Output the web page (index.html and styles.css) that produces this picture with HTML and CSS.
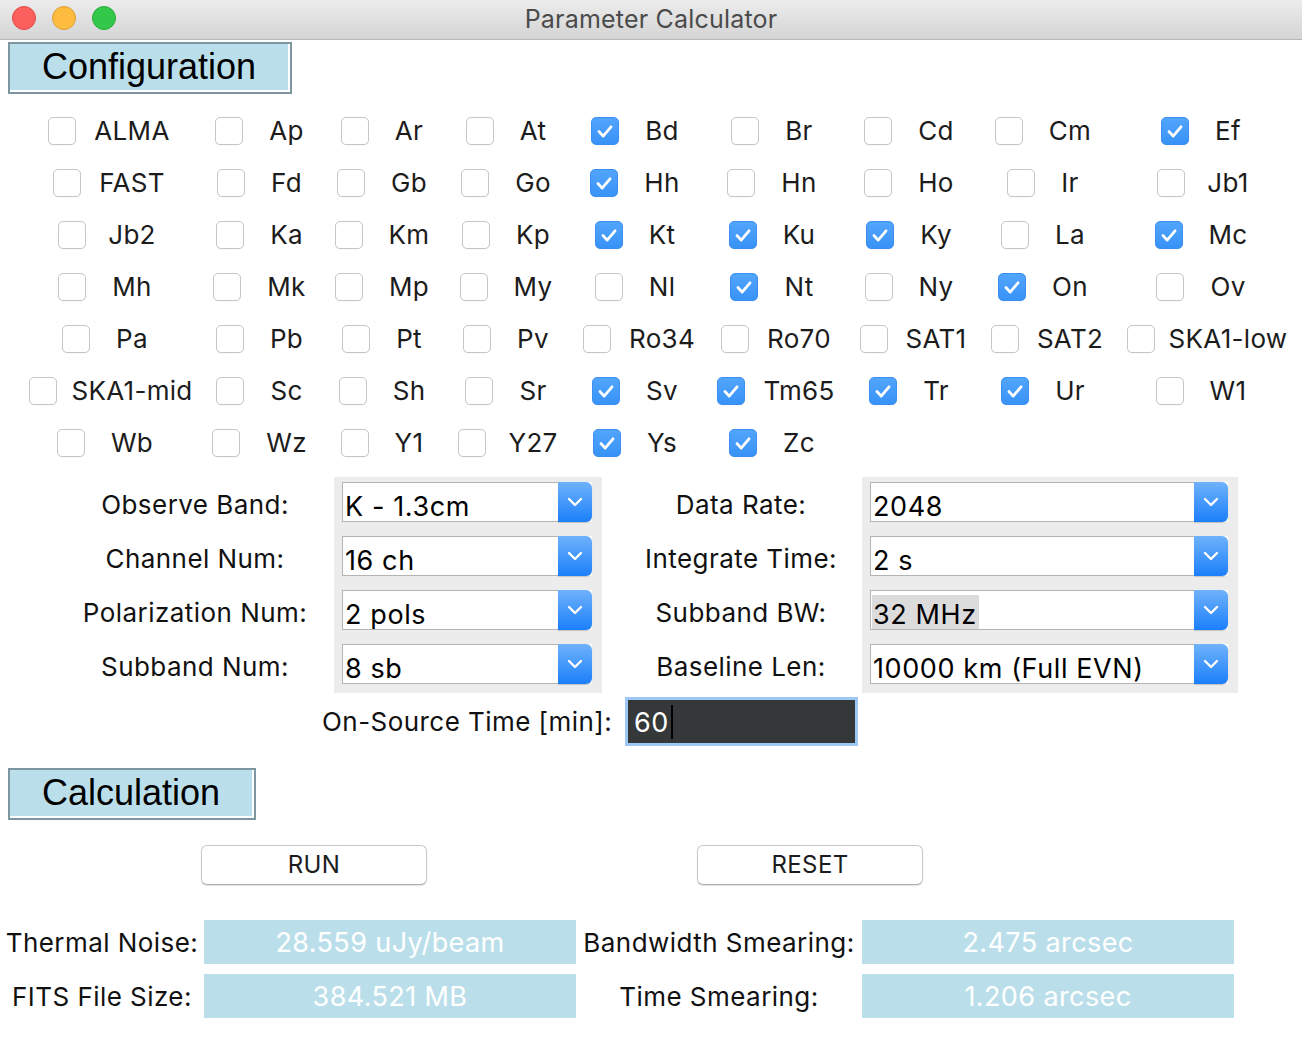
FILE: index.html
```html
<!DOCTYPE html>
<html>
<head>
<meta charset="utf-8">
<title>Parameter Calculator</title>
<link rel="stylesheet" href="styles.css">
</head>
<body>
<div class="window">
  <div class="titlebar">
    <div class="lights">
      <span class="light red"></span>
      <span class="light yellow"></span>
      <span class="light green"></span>
    </div>
    <div class="title">Parameter Calculator</div>
    <div></div>
  </div>

  <div class="section-head config">Configuration</div>

  <div class="checks">
    <div class="cell"><span class="box"></span><span class="lbl l">ALMA</span></div>
    <div class="cell"><span class="box"></span><span class="lbl">Ap</span></div>
    <div class="cell"><span class="box"></span><span class="lbl">Ar</span></div>
    <div class="cell"><span class="box"></span><span class="lbl">At</span></div>
    <div class="cell"><span class="box on"><svg viewBox="0 0 28 28"><path d="M7.5 14.5l4.5 5 8.5-10"/></svg></span><span class="lbl">Bd</span></div>
    <div class="cell"><span class="box"></span><span class="lbl">Br</span></div>
    <div class="cell"><span class="box"></span><span class="lbl">Cd</span></div>
    <div class="cell"><span class="box"></span><span class="lbl">Cm</span></div>
    <div class="cell"><span class="box on"><svg viewBox="0 0 28 28"><path d="M7.5 14.5l4.5 5 8.5-10"/></svg></span><span class="lbl">Ef</span></div>

    <div class="cell"><span class="box"></span><span class="lbl l">FAST</span></div>
    <div class="cell"><span class="box"></span><span class="lbl">Fd</span></div>
    <div class="cell"><span class="box"></span><span class="lbl">Gb</span></div>
    <div class="cell"><span class="box"></span><span class="lbl">Go</span></div>
    <div class="cell"><span class="box on"><svg viewBox="0 0 28 28"><path d="M7.5 14.5l4.5 5 8.5-10"/></svg></span><span class="lbl">Hh</span></div>
    <div class="cell"><span class="box"></span><span class="lbl">Hn</span></div>
    <div class="cell"><span class="box"></span><span class="lbl">Ho</span></div>
    <div class="cell"><span class="box"></span><span class="lbl">Ir</span></div>
    <div class="cell"><span class="box"></span><span class="lbl m">Jb1</span></div>

    <div class="cell"><span class="box"></span><span class="lbl m">Jb2</span></div>
    <div class="cell"><span class="box"></span><span class="lbl">Ka</span></div>
    <div class="cell"><span class="box"></span><span class="lbl">Km</span></div>
    <div class="cell"><span class="box"></span><span class="lbl">Kp</span></div>
    <div class="cell"><span class="box on"><svg viewBox="0 0 28 28"><path d="M7.5 14.5l4.5 5 8.5-10"/></svg></span><span class="lbl">Kt</span></div>
    <div class="cell"><span class="box on"><svg viewBox="0 0 28 28"><path d="M7.5 14.5l4.5 5 8.5-10"/></svg></span><span class="lbl">Ku</span></div>
    <div class="cell"><span class="box on"><svg viewBox="0 0 28 28"><path d="M7.5 14.5l4.5 5 8.5-10"/></svg></span><span class="lbl">Ky</span></div>
    <div class="cell"><span class="box"></span><span class="lbl">La</span></div>
    <div class="cell"><span class="box on"><svg viewBox="0 0 28 28"><path d="M7.5 14.5l4.5 5 8.5-10"/></svg></span><span class="lbl">Mc</span></div>

    <div class="cell"><span class="box"></span><span class="lbl">Mh</span></div>
    <div class="cell"><span class="box"></span><span class="lbl">Mk</span></div>
    <div class="cell"><span class="box"></span><span class="lbl">Mp</span></div>
    <div class="cell"><span class="box"></span><span class="lbl">My</span></div>
    <div class="cell"><span class="box"></span><span class="lbl">Nl</span></div>
    <div class="cell"><span class="box on"><svg viewBox="0 0 28 28"><path d="M7.5 14.5l4.5 5 8.5-10"/></svg></span><span class="lbl">Nt</span></div>
    <div class="cell"><span class="box"></span><span class="lbl">Ny</span></div>
    <div class="cell"><span class="box on"><svg viewBox="0 0 28 28"><path d="M7.5 14.5l4.5 5 8.5-10"/></svg></span><span class="lbl">On</span></div>
    <div class="cell"><span class="box"></span><span class="lbl">Ov</span></div>

    <div class="cell"><span class="box"></span><span class="lbl">Pa</span></div>
    <div class="cell"><span class="box"></span><span class="lbl">Pb</span></div>
    <div class="cell"><span class="box"></span><span class="lbl">Pt</span></div>
    <div class="cell"><span class="box"></span><span class="lbl">Pv</span></div>
    <div class="cell"><span class="box"></span><span class="lbl l">Ro34</span></div>
    <div class="cell"><span class="box"></span><span class="lbl l">Ro70</span></div>
    <div class="cell"><span class="box"></span><span class="lbl l">SAT1</span></div>
    <div class="cell"><span class="box"></span><span class="lbl l">SAT2</span></div>
    <div class="cell"><span class="box"></span><span class="lbl xl">SKA1-low</span></div>

    <div class="cell"><span class="box"></span><span class="lbl xl">SKA1-mid</span></div>
    <div class="cell"><span class="box"></span><span class="lbl">Sc</span></div>
    <div class="cell"><span class="box"></span><span class="lbl">Sh</span></div>
    <div class="cell"><span class="box"></span><span class="lbl">Sr</span></div>
    <div class="cell"><span class="box on"><svg viewBox="0 0 28 28"><path d="M7.5 14.5l4.5 5 8.5-10"/></svg></span><span class="lbl">Sv</span></div>
    <div class="cell"><span class="box on"><svg viewBox="0 0 28 28"><path d="M7.5 14.5l4.5 5 8.5-10"/></svg></span><span class="lbl l">Tm65</span></div>
    <div class="cell"><span class="box on"><svg viewBox="0 0 28 28"><path d="M7.5 14.5l4.5 5 8.5-10"/></svg></span><span class="lbl">Tr</span></div>
    <div class="cell"><span class="box on"><svg viewBox="0 0 28 28"><path d="M7.5 14.5l4.5 5 8.5-10"/></svg></span><span class="lbl">Ur</span></div>
    <div class="cell"><span class="box"></span><span class="lbl">W1</span></div>

    <div class="cell"><span class="box"></span><span class="lbl">Wb</span></div>
    <div class="cell"><span class="box"></span><span class="lbl">Wz</span></div>
    <div class="cell"><span class="box"></span><span class="lbl">Y1</span></div>
    <div class="cell"><span class="box"></span><span class="lbl m">Y27</span></div>
    <div class="cell"><span class="box on"><svg viewBox="0 0 28 28"><path d="M7.5 14.5l4.5 5 8.5-10"/></svg></span><span class="lbl">Ys</span></div>
    <div class="cell"><span class="box on"><svg viewBox="0 0 28 28"><path d="M7.5 14.5l4.5 5 8.5-10"/></svg></span><span class="lbl">Zc</span></div>
  </div>

  <div class="form">
    <div class="flabel">Observe Band:</div>
    <div class="fcell"><div class="select"><span class="val">K - 1.3cm</span><span class="arrow"><svg viewBox="0 0 16 10"><path d="M2 2l6 6 6-6"/></svg></span></div></div>
    <div class="flabel r">Data Rate:</div>
    <div class="fcell"><div class="select"><span class="val">2048</span><span class="arrow"><svg viewBox="0 0 16 10"><path d="M2 2l6 6 6-6"/></svg></span></div></div>

    <div class="flabel">Channel Num:</div>
    <div class="fcell"><div class="select"><span class="val">16 ch</span><span class="arrow"><svg viewBox="0 0 16 10"><path d="M2 2l6 6 6-6"/></svg></span></div></div>
    <div class="flabel r">Integrate Time:</div>
    <div class="fcell"><div class="select"><span class="val">2 s</span><span class="arrow"><svg viewBox="0 0 16 10"><path d="M2 2l6 6 6-6"/></svg></span></div></div>

    <div class="flabel">Polarization Num:</div>
    <div class="fcell"><div class="select"><span class="val">2 pols</span><span class="arrow"><svg viewBox="0 0 16 10"><path d="M2 2l6 6 6-6"/></svg></span></div></div>
    <div class="flabel r">Subband BW:</div>
    <div class="fcell"><div class="select"><span class="val"><span class="hl">32 MHz</span></span><span class="arrow"><svg viewBox="0 0 16 10"><path d="M2 2l6 6 6-6"/></svg></span></div></div>

    <div class="flabel">Subband Num:</div>
    <div class="fcell"><div class="select"><span class="val">8 sb</span><span class="arrow"><svg viewBox="0 0 16 10"><path d="M2 2l6 6 6-6"/></svg></span></div></div>
    <div class="flabel r">Baseline Len:</div>
    <div class="fcell"><div class="select"><span class="val">10000 km (Full EVN)</span><span class="arrow"><svg viewBox="0 0 16 10"><path d="M2 2l6 6 6-6"/></svg></span></div></div>
  </div>

  <div class="onsource">
    <div class="os-label">On-Source Time [min]:</div>
    <div class="entry"><span class="entry-text">60</span><span class="caret"></span></div>
  </div>

  <div class="section-head calc">Calculation</div>

  <div class="buttons">
    <div class="btn">RUN</div>
    <div class="btn">RESET</div>
  </div>

  <div class="results">
    <div class="rlabel">Thermal Noise:</div>
    <div class="rval">28.559 uJy/beam</div>
    <div class="rlabel">Bandwidth Smearing:</div>
    <div class="rval">2.475 arcsec</div>
    <div class="rlabel">FITS File Size:</div>
    <div class="rval">384.521 MB</div>
    <div class="rlabel">Time Smearing:</div>
    <div class="rval">1.206 arcsec</div>
  </div>
</div>
</body>
</html>
```

FILE: styles.css
```css
html, body {
  margin: 0;
  padding: 0;
  background: #ffffff;
  overflow: hidden;
}

.window {
  width: 1302px;
  height: 1044px;
  overflow: hidden;
  font-family: "Inter", "Noto Sans", sans-serif;
  font-size: 26px;
  letter-spacing: 0.45px;
  color: #111;
}

/* title bar */
.titlebar {
  height: 39px;
  border-bottom: 1px solid #b8b8b8;
  background: linear-gradient(#ececec, #d4d4d4);
  display: grid;
  grid-template-columns: 1fr auto 1fr;
  align-items: center;
}
.lights {
  display: flex;
  gap: 16px;
  padding-left: 12px;
  align-self: start;
  padding-top: 6px;
}
.light {
  width: 24px;
  height: 24px;
  border-radius: 50%;
  box-sizing: border-box;
}
.red { background: #fc605c; border: 1px solid #df4744; }
.yellow { background: #fdbc40; border: 1px solid #de9f34; }
.green { background: #34c84a; border: 1px solid #27a935; }
.title {
  color: #4b4b4b;
  font-size: 25px;
  letter-spacing: 0.2px;
  padding-bottom: 1px;
}

/* section headers */
.section-head {
  margin-left: 8px;
  height: 52px;
  box-sizing: border-box;
  background: #bbdfea;
  border: 2px solid #7d96a0;
  box-shadow: inset -2px -2px 0 #ffffff;
  font-family: "Liberation Sans", Arial, sans-serif;
  font-size: 36px;
  letter-spacing: 0;
  color: #000;
  display: flex;
  align-items: center;
  justify-content: center;
  padding-bottom: 2px;
  padding-right: 2px;
}
.config {
  width: 284px;
  margin-top: 2px;
}
.calc {
  width: 248px;
  margin-top: 22px;
}

/* checkbox grid */
.checks {
  display: grid;
  grid-template-columns: 186px 123px 122px 126px 132px 142px 132px 136px 180px;
  grid-auto-rows: 52px;
  margin-left: 39px;
  margin-top: 11px;
}
.cell {
  display: flex;
  align-items: center;
  justify-content: center;
  min-width: 0;
}
.box {
  flex: none;
  width: 28px;
  height: 28px;
  box-sizing: border-box;
  border: 1px solid #c6c6c6;
  border-radius: 5px;
  background: #fff;
  box-shadow: 0 0.5px 0 rgba(0,0,0,0.06);
  display: flex;
}
.box.on {
  background: linear-gradient(#52a5fc, #3892f7);
  border-color: #3d90f2;
}
.box svg {
  width: 26px;
  height: 26px;
}
.box svg path {
  fill: none;
  stroke: #fff;
  stroke-width: 3;
  stroke-linecap: round;
  stroke-linejoin: round;
}
.lbl {
  --g: 26px;
  flex: none;
  margin-left: var(--g);
  margin-right: calc(28px + var(--g));
  line-height: 32px;
  white-space: nowrap;
  color: #1c1c1c;
  letter-spacing: 0.3px;
}
.lbl.m { --g: 22px; }
.lbl.l { --g: 18px; }
.lbl.xl { --g: 14px; }

/* form */
.form {
  display: grid;
  grid-template-columns: 278px 268px 260px 376px;
  grid-auto-rows: 54px;
  margin-left: 56px;
  margin-top: 8px;
}
.flabel {
  display: flex;
  align-items: center;
  justify-content: center;
  white-space: nowrap;
  color: #111;
}
.flabel.r {
  padding-left: 18px;
}
.fcell {
  background: #ececec;
  padding: 5px 10px 9px 8px;
}
.select {
  height: 40px;
  display: flex;
  background: #fff;
}
.val {
  flex: 1;
  box-sizing: border-box;
  border: 1px solid #b4b4b4;
  border-right: none;
  padding: 9px 0 0 2px;
  font-size: 27px;
  letter-spacing: 0.6px;
  line-height: 30px;
  color: #000;
  white-space: nowrap;
  overflow: hidden;
}
.hl {
  background: #dcdcdc;
  padding: 3px 2px 5px 1px;
  margin-left: -1px;
}
.arrow {
  flex: none;
  width: 34px;
  height: 40px;
  border-radius: 0 6px 6px 0;
  background: linear-gradient(#6fb2fb, #1b7ffa);
  display: flex;
  align-items: center;
  justify-content: center;
  box-shadow: 0 1px 1px rgba(0,0,0,0.18);
}
.arrow svg {
  width: 16px;
  height: 10px;
}
.arrow svg path {
  fill: none;
  stroke: #fff;
  stroke-width: 2.4;
  stroke-linecap: round;
  stroke-linejoin: round;
}

/* on-source */
.onsource {
  display: flex;
  align-items: center;
  margin-top: 4px;
  margin-left: 322px;
  height: 49px;
}
.os-label {
  width: 293px;
  white-space: nowrap;
  color: #111;
}
.entry {
  margin-left: 10px;
  width: 233px;
  height: 49px;
  box-sizing: border-box;
  border: 3px solid #9cc7f6;
  background: #353839;
  display: flex;
  align-items: center;
  padding-left: 6px;
}
.entry-text {
  color: #fff;
  font-size: 27px;
  letter-spacing: 0.5px;
  padding-top: 2px;
}
.caret {
  width: 2px;
  height: 34px;
  background: #000;
  margin-left: 2px;
}

/* buttons */
.buttons {
  display: flex;
  gap: 270px;
  margin-left: 201px;
  margin-top: 25px;
}
.btn {
  width: 226px;
  height: 40px;
  box-sizing: border-box;
  border: 1px solid #c8c8c8;
  border-bottom-color: #b0b0b0;
  border-radius: 6px;
  background: #fff;
  box-shadow: 0 1px 1px rgba(0,0,0,0.12);
  display: flex;
  align-items: center;
  justify-content: center;
  font-size: 24px;
  letter-spacing: 0.4px;
  color: #1c1c1c;
  padding-bottom: 2px;
}

/* results */
.results {
  display: grid;
  grid-template-columns: 204px 372px 286px 372px;
  grid-auto-rows: 44px;
  row-gap: 10px;
  margin-top: 35px;
}
.rlabel {
  display: flex;
  align-items: center;
  justify-content: center;
  white-space: nowrap;
  color: #111;
}
.rval {
  background: #bbdfea;
  color: #fff;
  display: flex;
  align-items: center;
  justify-content: center;
  font-size: 27px;
  letter-spacing: 0.4px;
}
```
